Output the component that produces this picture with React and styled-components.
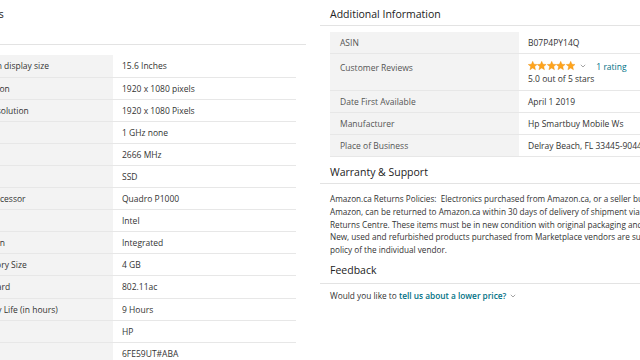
import React from 'react';
import styled, { createGlobalStyle } from 'styled-components';

const Global = createGlobalStyle`
  html, body { margin: 0; padding: 0; background: #fff; overflow: hidden; }
  body {
    width: 640px; height: 360px;
    font-family: "Open Sans", "Liberation Sans", sans-serif;
    color: #333;
    -webkit-font-smoothing: antialiased;
  }
`;

const Page = styled.div`
  display: flex;
  align-items: flex-start;
  gap: 14px;
  width: 640px;
  height: 360px;
  overflow: hidden;
`;

const Section = styled.section`
  flex: 0 0 ${(p) => p.$w}px;
  margin-left: ${(p) => p.$ml || 0}px;
  min-width: 0;
`;

const Heading = styled.h2`
  margin: 0;
  font-size: 10.5px;
  font-weight: 400;
  line-height: 14px;
  color: #222;
  padding: ${(p) => p.$pad};
  height: ${(p) => (p.$h ? `${p.$h}px` : 'auto')};
  box-sizing: border-box;
  border-bottom: 1px solid #e3e3e3;
  white-space: nowrap;
`;

const Table = styled.table`
  border-collapse: collapse;
  margin: ${(p) => p.$m};
  width: ${(p) => p.$w}px;
  table-layout: fixed;
  font-size: 8.5px;
  line-height: 11px;
`;

const Row = styled.tr`
  border-bottom: 1px solid #e7e7e7;
  height: ${(p) => (p.$h ? `${p.$h}px` : 'auto')};
`;

const Label = styled.th`
  width: ${(p) => p.$w}px;
  box-sizing: border-box;
  background: #f3f3f3;
  color: ${(p) => (p.$muted ? '#555' : '#333')};
  font-weight: 400;
  text-align: left;
  vertical-align: top;
  padding: ${(p) => p.$pt || 5}px 10px 5px ${(p) => p.$pl || 10}px;
  white-space: nowrap;
  overflow: hidden;
`;

const Value = styled.td`
  padding: 5px 9px;
  color: #333;
  vertical-align: top;
  white-space: nowrap;
`;

const StarLine = styled.div`
  display: flex;
  align-items: center;
  height: 14px;
`;

const Stars = styled.span`
  display: inline-flex;
  gap: 0.1px;
`;

const Chevron = styled.svg`
  width: 6px;
  height: 4px;
  margin: ${(p) => p.$m || '0 0 0 4px'};
  flex: none;
`;

const Link = styled.a`
  color: #007185;
  text-decoration: none;
  font-weight: ${(p) => (p.$bold ? 600 : 400)};
  margin-left: ${(p) => p.$ml || 0}px;
`;

const SubLine = styled.div`
  line-height: 12px;
`;

const Paragraph = styled.p`
  margin: 0;
  padding: 9px 10px 0;
  font-size: 8.2px;
  line-height: 12.75px;
  color: #333;
  white-space: nowrap;
`;

const Prompt = styled.div`
  padding: 6px 10px 0;
  font-size: 8.3px;
  line-height: 12px;
  color: #333;
  display: flex;
  align-items: center;
  white-space: nowrap;
`;

const Star = () => (
  <svg width="9.4" height="9.4" viewBox="0 0 10 10">
    <path
      d="M5 0.3 L6.35 3.45 L9.75 3.7 L7.15 5.9 L7.95 9.3 L5 7.5 L2.05 9.3 L2.85 5.9 L0.25 3.7 L3.65 3.45 Z"
      fill="#ffa41c"
      stroke="#e88b0c"
      strokeWidth="0.4"
    />
  </svg>
);

const Down = ({ m }) => (
  <Chevron viewBox="0 0 6 4" $m={m}>
    <polyline points="0.8,0.8 3,3 5.2,0.8" fill="none" stroke="#9a9a9a" strokeWidth="0.9" />
  </Chevron>
);

const techRows = [
  ['Standing screen display size', '15.6 Inches'],
  ['Screen Resolution', '1920 x 1080 pixels'],
  ['Max Screen Resolution', '1920 x 1080 Pixels'],
  ['Processor', '1 GHz none'],
  ['RAM', '2666 MHz'],
  ['Hard Drive', 'SSD'],
  ['Graphics Coprocessor', 'Quadro P1000'],
  ['Chipset Brand', 'Intel'],
  ['Card Description', 'Integrated'],
  ['Graphics Memory Size', '4 GB'],
  ['Wireless Standard', '802.11ac'],
  ['Average Battery Life (in hours)', '9 Hours'],
  ['Brand', 'HP'],
  ['Series', '6FE59UT#ABA'],
];

const infoRows = [
  ['ASIN', 'B07P4PY14Q'],
  ['Customer Reviews', null],
  ['Date First Available', 'April 1 2019'],
  ['Manufacturer', 'Hp Smartbuy Mobile Ws'],
  ['Place of Business', 'Delray Beach, FL 33445-9044 US'],
];

export default function App() {
  return (
    <>
      <Global />
      <Page>
        <Section $w={384} $ml={-78}>
          <Heading $pad="7px 0 0 0" $h={45}>Technical Details</Heading>
          <Table $m="10px 10px 0" $w={364}>
            <tbody>
              {techRows.map(([l, v]) => (
                <Row key={l} $h={22.1}>
                  <Label $w={181} $pl={6.5}>{l}</Label>
                  <Value>{v}</Value>
                </Row>
              ))}
            </tbody>
          </Table>
        </Section>

        <Section $w={420}>
          <Heading $pad="7px 10px 4px">Additional Information</Heading>
          <Table $m="6px 10px 0" $w={400}>
            <tbody>
              {infoRows.map(([l, v]) =>
                v === null ? (
                  <Row key={l}>
                    <Label $w={189} $muted $pt={8}>{l}</Label>
                    <Value>
                      <StarLine>
                        <Stars>
                          <Star /><Star /><Star /><Star /><Star />
                        </Stars>
                        <Down m="0 0 0 5px" />
                        <Link href="#" $ml={10}>1 rating</Link>
                      </StarLine>
                      <SubLine>5.0 out of 5 stars</SubLine>
                    </Value>
                  </Row>
                ) : (
                  <Row key={l}>
                    <Label $w={189} $muted>{l}</Label>
                    <Value>{v}</Value>
                  </Row>
                )
              )}
            </tbody>
          </Table>

          <Heading $pad="8px 10px 4px">Warranty &amp; Support</Heading>
          <Paragraph>
            Amazon.ca Returns Policies:&nbsp; Electronics purchased from Amazon.ca, or a seller but fulfilled by
            <br />
            Amazon, can be returned to Amazon.ca within 30 days of delivery of shipment via our online
            <br />
            Returns Centre. These items must be in new condition with original packaging and accessories.
            <br />
            New, used and refurbished products purchased from Marketplace vendors are subject to the returns
            <br />
            policy of the individual vendor.
          </Paragraph>

          <Heading $pad="6px 10px 6px">Feedback</Heading>
          <Prompt>
            Would you like to&nbsp;<Link href="#" $bold>tell us about a lower price?</Link>
            <Down m="0 0 0 4px" />
          </Prompt>
        </Section>
      </Page>
    </>
  );
}
